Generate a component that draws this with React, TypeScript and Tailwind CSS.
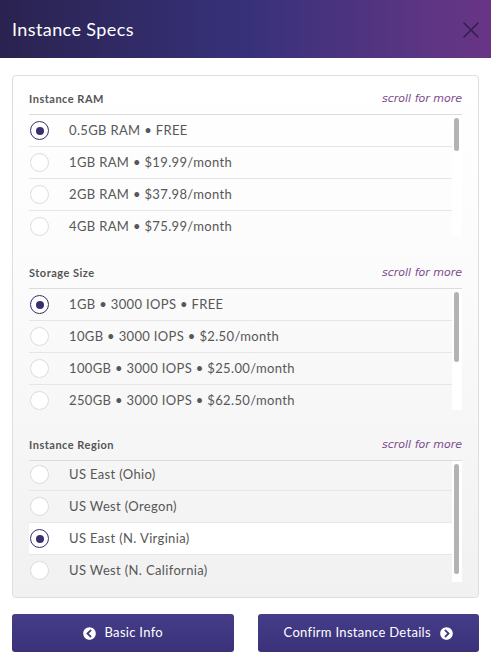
import { FaChevronCircleLeft, FaChevronCircleRight } from "react-icons/fa";

type Section = {
    title: string;
    options: string[];
    selected: number;
    thumbHeight: number;
    scrolled: boolean;
};

const sections: Section[] = [
    {
        title: "Instance RAM",
        options: ["0.5GB RAM • FREE", "1GB RAM • $19.99/month", "2GB RAM • $37.98/month", "4GB RAM • $75.99/month"],
        selected: 0,
        thumbHeight: 33,
        scrolled: false,
    },
    {
        title: "Storage Size",
        options: [
            "1GB • 3000 IOPS • FREE",
            "10GB • 3000 IOPS • $2.50/month",
            "100GB • 3000 IOPS • $25.00/month",
            "250GB • 3000 IOPS • $62.50/month",
        ],
        selected: 0,
        thumbHeight: 70,
        scrolled: false,
    },
    {
        title: "Instance Region",
        options: ["US East (Ohio)", "US West (Oregon)", "US East (N. Virginia)", "US West (N. California)"],
        selected: 2,
        thumbHeight: 110,
        scrolled: true,
    },
];

const Radio = ({ checked }: { checked: boolean }) => (
    <div
        className={
            checked
                ? "w-[19px] h-[19px] rounded-full border-[1.5px] border-[#3a2e6e] bg-white flex items-center justify-center shrink-0"
                : "w-[19px] h-[19px] rounded-full border border-[#dcdcdc] bg-white shrink-0"
        }
    >
        {checked && <div className="w-[8px] h-[8px] rounded-full bg-[#3a2e6e]"></div>}
    </div>
);

const SpecSection = ({ section, index }: { section: Section; index: number }) => {
    const spacing = index === 0 ? "" : index === 1 ? "mt-[29px]" : "mt-[27px]";
    return (
        <div className={spacing}>
            {/* Section header */}
            <div className="flex items-end justify-between pb-[8px] border-b border-[#dcdcdc]">
                <span className="text-[11px] font-bold text-[#555] leading-[15px] tracking-[0.5px]">{section.title}</span>
                <span className="text-[11px] italic text-[#7b4b8c] leading-[15px] font-['DejaVu_Sans',sans-serif]">
                    scroll for more
                </span>
            </div>

            {/* Scroll list */}
            <div className="flex h-[121px] overflow-hidden">
                <div className={"flex-1 flex flex-col " + (section.scrolled ? "mt-[-2px]" : "")}>
                    {section.options.map((opt, i) => (
                        <div
                            key={opt}
                            className={
                                "flex items-center h-[32px] shrink-0 border-b border-[#e6e6e6] pl-[1px] " +
                                (i === section.selected && section.scrolled ? "bg-white" : "")
                            }
                        >
                            <Radio checked={i === section.selected} />
                            <span className="ml-[20px] text-[13px] text-[#575757] tracking-[0.35px]">{opt}</span>
                        </div>
                    ))}
                </div>
                <div className="w-[10px] bg-white relative">
                    <div
                        className="absolute left-[2px] top-[3px] w-[5px] rounded-full bg-[#b3b3b3]"
                        style={{ height: section.thumbHeight }}
                    ></div>
                </div>
            </div>
        </div>
    );
};

export default function App() {
    return (
        <div className="w-[491px] h-[665px] bg-white font-['Lato',sans-serif] overflow-hidden">
            {/* Title bar */}
            <div className="h-[58px] flex items-center justify-between pl-[12px] pr-[12px] bg-[linear-gradient(90deg,#2a2350_0%,#37317a_50%,#5b3583_85%,#6a3486_100%)]">
                <h1 className="text-[18px] text-white font-normal tracking-[0.4px]">Instance Specs</h1>
                <svg width="16" height="16" viewBox="0 0 16 16" className="mt-[1px]">
                    <path d="M1 1 L15 15 M15 1 L1 15" stroke="#2e2150" strokeWidth="1.6" strokeLinecap="round" />
                </svg>
            </div>

            {/* Specs panel */}
            <div className="mx-[12px] mt-[17px] border border-[#dedede] rounded-[4px] px-[16px] pt-[15px] pb-[15px] bg-[linear-gradient(180deg,#ffffff_0%,#fbfbfb_40%,#f1f1f1_100%)]">
                {sections.map((s, i) => (
                    <SpecSection key={s.title} section={s} index={i} />
                ))}
            </div>

            {/* Footer buttons */}
            <div className="flex gap-[24px] px-[12px] mt-[16px]">
                <button className="flex-1 h-[38px] rounded-[3px] bg-[linear-gradient(180deg,#463d89_0%,#3a317a_100%)] text-white text-[13px] tracking-[0.3px] flex items-center justify-center gap-[9px]">
                    <FaChevronCircleLeft className="w-[13px] h-[13px]" />
                    <span>Basic Info</span>
                </button>
                <button className="flex-1 h-[38px] rounded-[3px] bg-[linear-gradient(180deg,#463d89_0%,#3a317a_100%)] text-white text-[13px] tracking-[0.3px] flex items-center justify-center gap-[9px]">
                    <span>Confirm Instance Details</span>
                    <FaChevronCircleRight className="w-[13px] h-[13px]" />
                </button>
            </div>
        </div>
    );
}
